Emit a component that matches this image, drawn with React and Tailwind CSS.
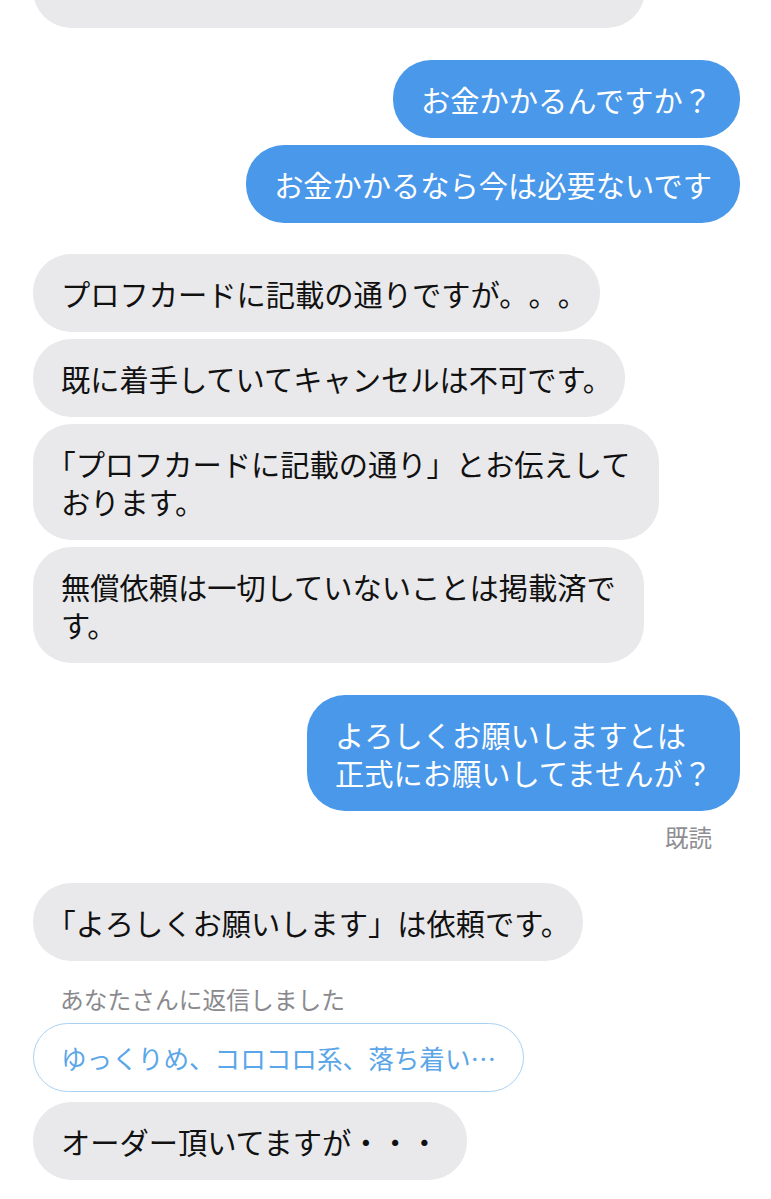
import React from "react";

const font = {
  fontFamily: '"Noto Sans CJK JP", "Noto Sans", sans-serif',
};

function Half({ children }) {
  return <span className="mr-[-0.5em]">{children}</span>;
}

function Gray({ children, className = "" }) {
  return (
    <div
      className={
        "self-start rounded-[38px] bg-[#e9e9eb] px-[28px] py-[20px] text-[29.25px] leading-[38px] text-[#111111] whitespace-nowrap " +
        className
      }
    >
      {children}
    </div>
  );
}

function Blue({ children, className = "" }) {
  return (
    <div
      className={
        "self-end rounded-[38px] bg-[#4a98e9] px-[28px] py-[20px] text-[29.25px] leading-[38px] text-white whitespace-nowrap " +
        className
      }
    >
      {children}
    </div>
  );
}

export default function App() {
  return (
    <div
      className="min-h-[1199px] w-[771px] overflow-hidden bg-white [text-spacing-trim:space-all]"
      style={font}
    >
      <div className="flex flex-col pl-[33px] pr-[31px]">
        <div className="-mt-[50px] h-[78px] w-[612px] rounded-[38px] bg-[#e9e9eb]" />

        <Blue className="mt-[32px]">お金かかるんですか？</Blue>
        <Blue className="mt-[7px]">お金かかるなら今は必要ないです</Blue>

        <Gray className="mt-[31px]">
          プロフカードに記載の通りですが。。<Half>。</Half>
        </Gray>
        <Gray className="mt-[7px]">
          既に着手していてキャンセルは不可です<Half>。</Half>
        </Gray>
        <Gray className="mt-[7px]">
          <span className="ml-[-0.5em]">「</span>プロフカードに記載の通り」とお伝えして
          <br />
          おります。
        </Gray>
        <Gray className="mt-[7px]">
          無償依頼は一切していないことは掲載済で
          <br />
          す。
        </Gray>

        <Blue className="mt-[32px]">
          よろしくお願いしますとは
          <br />
          正式にお願いしてませんが？
        </Blue>
        <div className="mt-[12px] self-end pr-[28px] text-[23.5px] leading-[28px] text-[#8e8e93]">
          既読
        </div>

        <Gray className="mt-[32px]">
          <span className="ml-[-0.5em]">「</span>よろしくお願いします」は依頼です<Half>。</Half>
        </Gray>

        <div className="mt-[24px] pl-[27px] text-[23.75px] leading-[28px] text-[#8a8a8e]">
          あなたさんに返信しました
        </div>

        <div className="mt-[10px] self-start rounded-[36px] border-[1.5px] border-[#a9d1f3] bg-white px-[27px] py-[19px] text-[25.6px] leading-[29px] text-[#5aa6e8] whitespace-nowrap">
          ゆっくりめ、コロコロ系、落ち着い…
        </div>

        <Gray className="mt-[10px]">オーダー頂いてますが・・・</Gray>
      </div>
    </div>
  );
}
